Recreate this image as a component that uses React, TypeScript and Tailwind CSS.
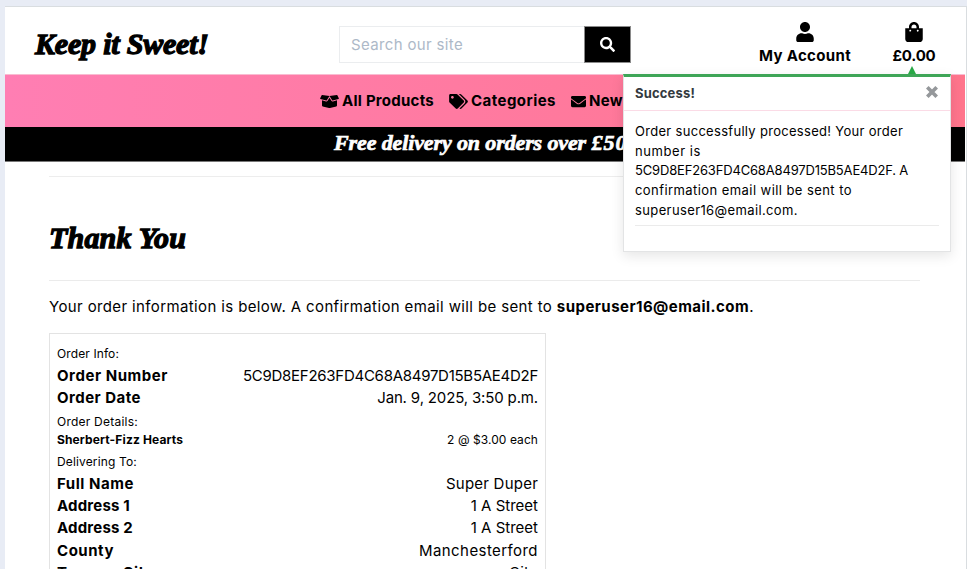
import { FaBoxOpen, FaEnvelope, FaSearch, FaShoppingBag, FaTags, FaUser } from "react-icons/fa";

const script =
  "font-['Liberation_Serif',serif] font-bold italic whitespace-nowrap";

type RowProps = {
  label: string;
  value: string;
  labelClass: string;
  valueClass?: string;
  small?: boolean;
};

function Row({ label, value, labelClass, valueClass = "", small = false }: RowProps) {
  return (
    <div
      className={
        small
          ? "flex h-[18px] items-center justify-between text-[12px]"
          : "flex h-[22.33px] items-center justify-between text-[15px]"
      }
    >
      <span className={`font-bold ${labelClass}`}>{label}</span>
      <span className={valueClass}>{value}</span>
    </div>
  );
}

function Toast() {
  return (
    <div className="absolute left-[618px] top-[59px] w-[328px]">
      <div className="ml-[285px] h-[8px] w-[8px] bg-[#28a745] [clip-path:polygon(50%_0,100%_100%,0_100%)]" />
      <div className="h-[178px] border border-t-[3px] border-[#e3e4e5] border-t-[#3ea557] bg-white shadow-[0_4px_12px_rgba(0,0,0,0.1)]">
        <div className="flex h-[34px] items-center justify-between border-b border-[#fbdbe6] pl-[11px] pr-[12px]">
          <span className="text-[13px] font-bold tracking-[0.17px] text-[#343a40]">Success!</span>
          <svg viewBox="0 0 12 12" className="mb-[3px] h-[12px] w-[12px]" stroke="#95989b" strokeWidth="3.7">
            <path d="M1.3 1.3 10.7 10.7M10.7 1.3 1.3 10.7" />
          </svg>
        </div>
        <div className="mx-[11px] mt-[11px] border-b border-[#ebebeb] pb-[4px] text-[13px] leading-[19.7px] whitespace-nowrap">
          <div className="tracking-[0.3px]">Order successfully processed! Your order</div>
          <div className="tracking-[0.57px]">number is</div>
          <div className="tracking-[-0.17px]">5C9D8EF263FD4C68A8497D15B5AE4D2F. A</div>
          <div className="tracking-[0.43px]">confirmation email will be sent to</div>
          <div className="tracking-[0.38px]">superuser16@email.com.</div>
        </div>
      </div>
    </div>
  );
}

export default function App() {
  return (
    <div className="h-[569px] w-[967px] overflow-hidden bg-[#e8ecf5] pl-[5px] pt-[6px] font-['Inter',sans-serif] text-black">
      <div className="relative h-[563px] w-[962px] border-r border-t border-[#d9dde0] bg-white">
        <header className="flex h-[67px] items-start pl-[30px] whitespace-nowrap">
          <div className={`${script} mt-[20px] w-[304px] text-[30px] leading-[34px] tracking-[-0.2px] [-webkit-text-stroke:1.3px_currentColor]`}>
            Keep it Sweet!
          </div>
          <div className="mt-[19px] flex h-[37px] w-[292px]">
            <div className="flex w-[245px] items-center border border-r-0 border-[#ebedef] pl-[11px] pt-[2px] text-[15px] tracking-[0.35px] text-[#adb9c8]">
              Search our site
            </div>
            <div className="flex w-[47px] items-center justify-center border border-[#8a8a8a] bg-black">
              <FaSearch className="h-[15px] w-[15px] text-white" />
            </div>
          </div>
          <div className="ml-[127px] mt-[15px] flex w-[94px] flex-col items-center text-[15px] font-bold tracking-[0.34px]">
            <FaUser className="h-[20px] w-[18px]" />
            <span className="leading-[28px]">My Account</span>
          </div>
          <div className="ml-[38px] mt-[15px] flex w-[48px] flex-col items-center text-[15px] font-bold tracking-[-0.21px]">
            <FaShoppingBag className="h-[20px] w-[18px]" />
            <span className="leading-[28px]">£0.00</span>
          </div>
        </header>

        <nav className="flex h-[53px] w-[960px] items-center border-t border-[#f9bcd1] bg-linear-to-r from-[#ff7eb3] to-[#ff758c] pl-[315px] text-[15px] font-bold whitespace-nowrap">
          <div className="flex w-[129px] items-center gap-[3px] tracking-[0.25px]">
            <FaBoxOpen className="h-[15px] w-[19px]" />
            All Products
          </div>
          <div className="flex w-[122px] items-center gap-[3px] tracking-[0.46px]">
            <FaTags className="h-[15px] w-[19px]" />
            Categories
          </div>
          <div className="flex items-center gap-[3px] tracking-[0.3px]">
            <FaEnvelope className="h-[15px] w-[15px]" />
            New
          </div>
        </nav>

        <div className="flex h-[35px] w-[960px] items-center border-b border-[#777777] bg-black pb-[2px] pl-[329px] text-white">
          <span className={`${script} text-[22px] leading-[28px] tracking-[-0.12px] [-webkit-text-stroke:0.7px_currentColor]`}>
            Free delivery on orders over <span className="tracking-[1px]">£50</span>
          </span>
        </div>

        <main className="ml-[44px] w-[871px]">
          <div className="mt-[14px] border-t border-[#ededed]" />
          <h2 className={`${script} mt-[44px] text-[30px] leading-[34px] tracking-[0.2px] [-webkit-text-stroke:1.3px_currentColor]`}>Thank You</h2>
          <div className="mt-[25px] border-t border-[#ebebeb]" />
          <p className="mt-[14px] text-[15px] leading-[23px] tracking-[0.375px] whitespace-nowrap">
            Your order information is below. A confirmation email will be sent to{" "}
            <b className="tracking-[0.46px]">superuser16@email.com</b>.
          </p>
          <section className="mt-[15px] h-[260px] w-[497px] border border-[#e3e3e3] px-[7px] pt-[9px] whitespace-nowrap">
            <div className="flex h-[22px] items-center text-[12px] tracking-[0.11px]">Order Info:</div>
            <Row label="Order Number" value="5C9D8EF263FD4C68A8497D15B5AE4D2F" labelClass="tracking-[0.56px]" valueClass="tracking-[-0.27px]" />
            <Row label="Order Date" value="Jan. 9, 2025, 3:50 p.m." labelClass="tracking-[0.48px]" valueClass="tracking-[-0.15px]" />
            <div className="mt-[3px] flex h-[18px] items-center text-[12px] tracking-[0.23px]">Order Details:</div>
            <Row small label="Sherbert-Fizz Hearts" value="2 @ $3.00 each" labelClass="tracking-[0.13px]" valueClass="tracking-[0.07px]" />
            <div className="mt-[4px] flex h-[18px] items-center text-[12px] tracking-[0.15px]">Delivering To:</div>
            <div className="mt-[2px]">
              <Row label="Full Name" value="Super Duper" labelClass="tracking-[0.55px]" valueClass="tracking-[0.22px]" />
              <Row label="Address 1" value="1 A Street" labelClass="tracking-[0.19px]" />
              <Row label="Address 2" value="1 A Street" labelClass="tracking-[0.19px]" />
              <Row label="County" value="Manchesterford" labelClass="tracking-[0.53px]" valueClass="tracking-[0.43px]" />
              <Row label="Town or City" value="City" labelClass="tracking-[0.4px]" valueClass="tracking-[0.2px]" />
            </div>
          </section>
        </main>

        <Toast />
      </div>
    </div>
  );
}
